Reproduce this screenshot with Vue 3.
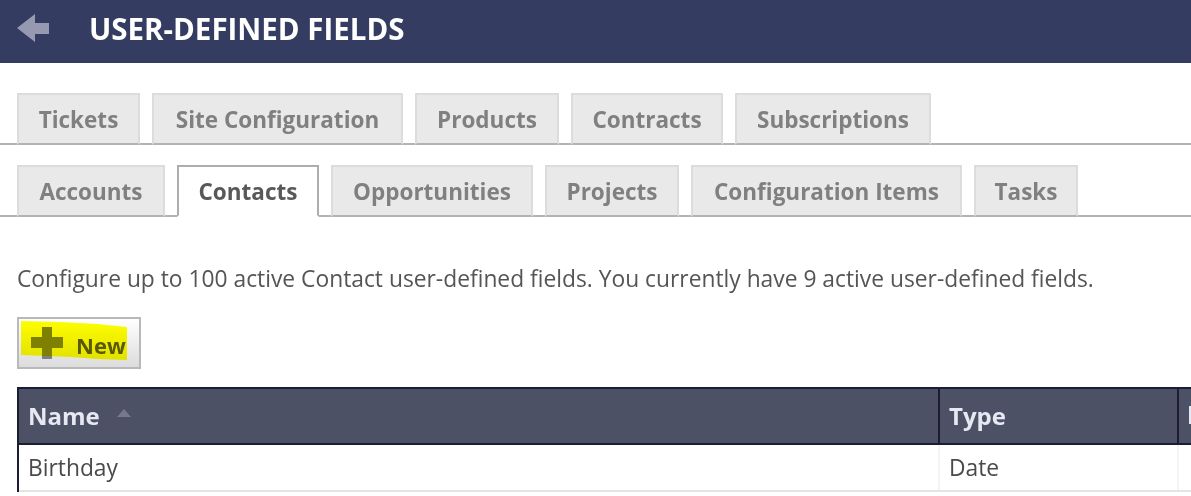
<script setup>
const topTabs = [
  { label: 'Tickets', width: 123 },
  { label: 'Site Configuration', width: 251 },
  { label: 'Products', width: 144 },
  { label: 'Contracts', width: 152 },
  { label: 'Subscriptions', width: 196 }
]

const bottomTabs = [
  { label: 'Accounts', width: 148 },
  { label: 'Contacts', width: 142, active: true },
  { label: 'Opportunities', width: 202 },
  { label: 'Projects', width: 134 },
  { label: 'Configuration Items', width: 271 },
  { label: 'Tasks', width: 104 }
]
</script>

<template>
  <div class="page">
    <header class="page-header">
      <svg class="back-icon" width="32" height="28" viewBox="0 0 32 28">
        <path d="M0 14 L18 0 V9 H32 V20 H18 V28 Z" fill="#9699b0" />
      </svg>
      <h1 class="page-title">USER-DEFINED FIELDS</h1>
    </header>

    <nav class="tab-row tab-row--first">
      <div
        v-for="tab in topTabs"
        :key="tab.label"
        class="tab"
        :style="{ width: tab.width + 'px' }"
      >
        {{ tab.label }}
      </div>
    </nav>

    <nav class="tab-row tab-row--second">
      <div
        v-for="tab in bottomTabs"
        :key="tab.label"
        :class="['tab', { 'tab--active': tab.active }]"
        :style="{ width: tab.width + 'px' }"
      >
        {{ tab.label }}
      </div>
    </nav>

    <p class="summary">
      Configure up to 100 active Contact user-defined fields. You currently have 9 active user-defined fields.
    </p>

    <div class="new-button">
      <svg class="plus-icon" width="32" height="32" viewBox="0 0 32 32">
        <path d="M11 0 H21 V10 H32 V21 H21 V32 H11 V21 H0 V10 H11 Z" fill="#7f7f7f" />
      </svg>
      <span class="new-label">New</span>
      <!-- highlighter marking drawn over the button -->
      <svg class="marker" width="106" height="42" viewBox="0 0 106 42">
        <path d="M0 0 L40 1 L76 3 L106 6 V39 L76 38 L50 36 L0 34 Z" fill="#ffff00" />
      </svg>
    </div>

    <div class="grid">
      <div class="grid-row grid-row--head">
        <div class="cell cell--name">
          Name
          <span class="sort-arrow"></span>
        </div>
        <div class="cell cell--type">Type</div>
        <!-- next column heading is cut off by the window, only its first stem shows -->
        <div class="cell cell--rest"><span class="cut-heading"></span></div>
      </div>
      <div class="grid-row grid-row--body">
        <div class="cell cell--name">Birthday</div>
        <div class="cell cell--type">Date</div>
        <div class="cell cell--rest"></div>
      </div>
    </div>
  </div>
</template>

<style>
html,
body {
  margin: 0;
  overflow: hidden;
  background: #fff;
}
</style>

<style scoped>
.page {
  width: 1191px;
  height: 496px;
  overflow: hidden;
  font-family: "Open Sans", "Noto Sans", sans-serif;
  color: #4f4f4f;
}

.page-header {
  display: flex;
  align-items: center;
  height: 63px;
  padding-left: 17px;
  box-sizing: border-box;
  background: #353c62;
}

.back-icon {
  flex: none;
  margin-top: -8px;
  filter: blur(0.6px);
}

.page-title {
  margin: 0 0 6px 40px;
  font-size: 29.5px;
  font-weight: 700;
  color: #fff;
  white-space: nowrap;
}

.tab-row {
  display: flex;
  gap: 12px;
  height: 52px;
  padding-left: 17px;
  box-sizing: border-box;
  border-bottom: 2px solid #b3b3b3;
}

.tab-row--first {
  margin-top: 30px;
}

.tab-row--second {
  margin-top: 20px;
}

.tab {
  display: flex;
  align-items: center;
  justify-content: center;
  height: 52px;
  box-sizing: border-box;
  background: #e9e9e9;
  border: 2px solid #dcdcdc;
  border-bottom: 2px solid #b3b3b3;
  font-size: 22.5px;
  font-weight: 700;
  color: #808080;
  white-space: nowrap;
}

.tab--active {
  background: #fff;
  border-color: #adadad;
  border-bottom: 2px solid #fff;
  color: #595959;
}

.summary {
  margin: 47px 0 0 17px;
  font-size: 22.8px;
  line-height: 30px;
  color: #555;
  white-space: nowrap;
}

.new-button {
  position: relative;
  display: flex;
  align-items: center;
  width: 124px;
  height: 52px;
  margin: 23px 0 0 17px;
  padding-left: 12px;
  box-sizing: border-box;
  background: linear-gradient(#fff, #dcdcdc);
  border: 2px solid #b9b9b9;
}

.plus-icon {
  flex: none;
  filter: blur(0.6px);
}

.new-label {
  margin: 3px 0 0 13px;
  font-size: 22px;
  font-weight: 700;
  color: #595959;
}

.marker {
  position: absolute;
  top: 2px;
  left: 2px;
  mix-blend-mode: multiply;
}

.grid {
  width: 1200px;
  margin: 18px 0 0 17px;
  border: 2px solid #1b1d33;
  border-bottom: 0;
  border-right: 0;
  box-sizing: border-box;
}

.grid-row {
  display: flex;
}

.grid-row--head {
  height: 54px;
  background: #4d5166;
  border-bottom: 2px solid #1b1d33;
  font-size: 24px;
  font-weight: 700;
  color: #e6e8f2;
}

.grid-row--head .cell {
  padding-bottom: 2px;
}

.grid-row--body {
  height: 45px;
  border-bottom: 2px solid #e4e4e4;
  font-size: 22.8px;
  color: #4a4a4a;
}

.cell {
  display: flex;
  align-items: center;
  box-sizing: border-box;
  padding-left: 9px;
}

.cell--name {
  width: 921px;
}

.cell--type {
  width: 239px;
}

.cell--rest {
  flex: 1;
}

.grid-row--head .cell--name,
.grid-row--head .cell--type {
  border-right: 2px solid #1b1d33;
}

.grid-row--body .cell--name,
.grid-row--body .cell--type {
  border-right: 2px solid #f4f4f4;
}

.sort-arrow {
  width: 0;
  height: 0;
  margin: -4px 0 0 17px;
  border-left: 7px solid transparent;
  border-right: 7px solid transparent;
  border-bottom: 8px solid #77798a;
}

.cut-heading {
  width: 4px;
  height: 18px;
  margin-left: 1px;
  background: #e6e8f2;
}
</style>
